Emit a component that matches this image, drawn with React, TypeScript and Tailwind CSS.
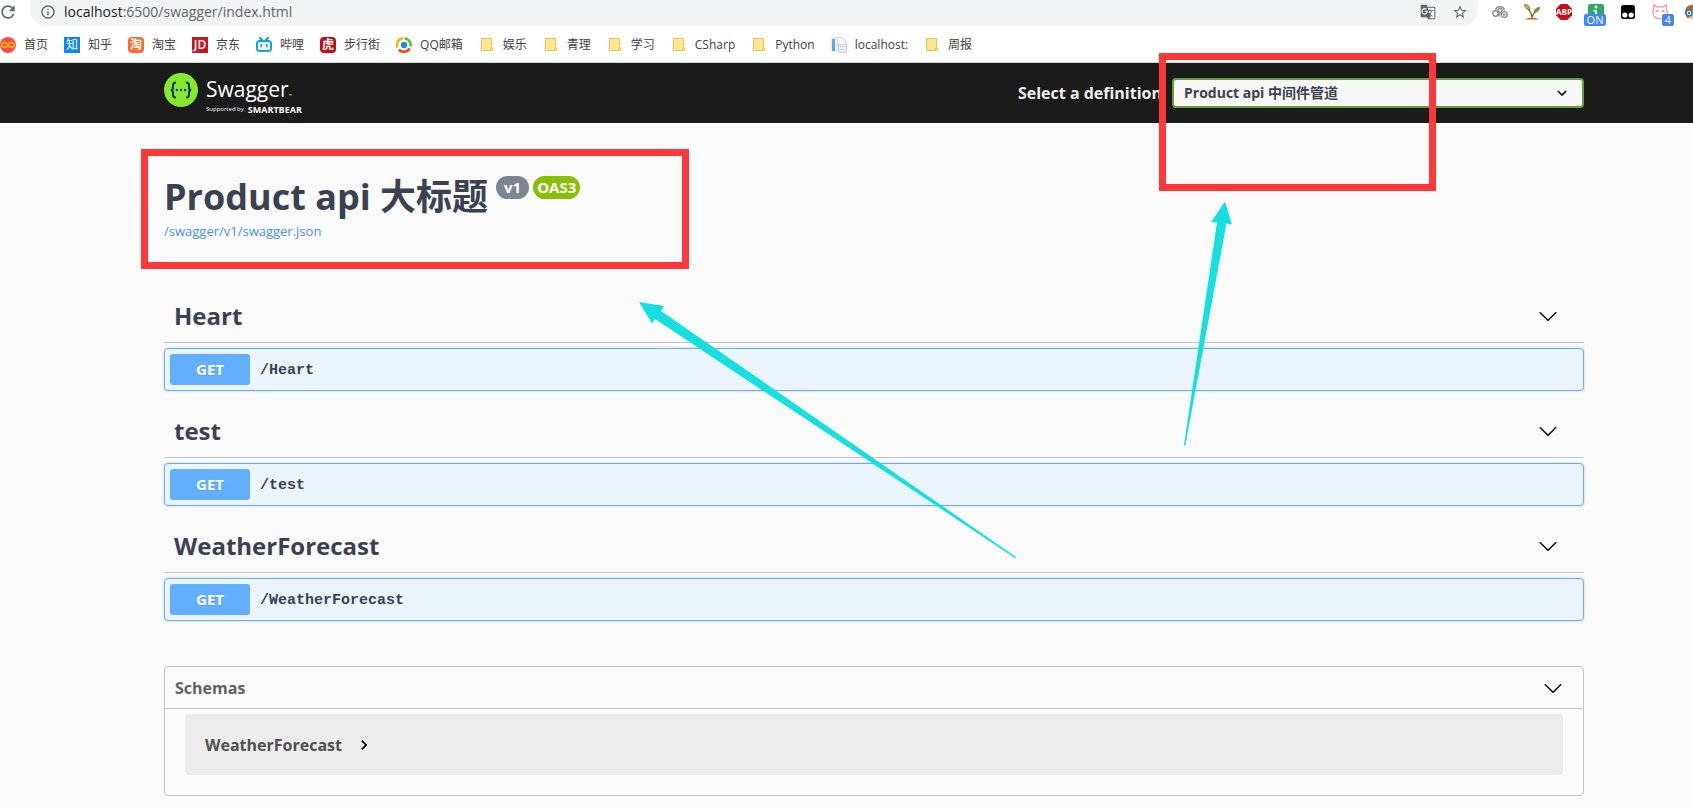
import React from 'react'
import { MdStarBorder, MdGTranslate, MdRefresh, MdInfoOutline } from 'react-icons/md'

interface Bookmark {
  label: string
  icon: React.ReactNode
}

const FolderIcon = () => (
  <svg className="size-4" viewBox="0 0 16 16">
    <path d="M2.5 1.5h10v9h1v3h-11z" fill="#ffe694" stroke="#e8c445" />
    <path d="M11.5 13.5v-2.5h2v2.5z" fill="#ffe694" stroke="#e8c445" />
  </svg>
)

const HomeIcon = () => (
  <svg className="size-4" viewBox="0 0 16 16">
    <circle cx="8" cy="8" r="8" fill="#ff4a4a" />
    <path
      d="M8 8C6.500 5.800 5.500 5.500 4.500 5.500a2.500 2.500 0 0 0 0 5C5.500 10.500 6.500 10.200 8 8s2.500-2.500 3.500-2.500a2.500 2.500 0 0 1 0 5C10.500 10.500 9.500 10.200 8 8z"
      fill="none"
      stroke="#ffc400"
      strokeWidth="1.500"
    />
  </svg>
)

const BiliIcon = () => (
  <svg className="size-4" viewBox="0 0 16 16" fill="none" stroke="#10a5dc" strokeWidth="2" strokeLinecap="round">
    <rect x="1" y="4" width="14" height="10" rx="2.500" />
    <path d="M4 1l2.500 2.500M12 1L9.500 3.500M5.200 8v1.500M10.800 8v1.500" />
  </svg>
)

const QQMailIcon = () => (
  <svg className="size-4" viewBox="0 0 16 16" fill="none">
    <path d="M1.200 10.500A7 7 0 0 1 7 1.300" stroke="#fbb500" strokeWidth="2.600" />
    <path d="M8.500 1.300A7 7 0 0 1 14.600 9.500" stroke="#5fb930" strokeWidth="2.600" />
    <path d="M13.800 11.500A7 7 0 0 1 2.800 12.600" stroke="#f04a12" strokeWidth="2.600" />
    <circle cx="8" cy="8" r="3.200" fill="#1f8fe0" />
  </svg>
)

const PageIcon = () => (
  <svg className="size-4" viewBox="0 0 16 16">
    <path d="M1 1h9v13H1z" fill="#f1f4f8" stroke="#ccd5df" />
    <path d="M1 2h3v12H1z" fill="#5fa8dc" />
    <path d="M6.500.5h5l3 3v6h-8z" fill="#fbfcfd" stroke="#d2d8e0" />
    <path d="M7.500 7.500h8v8h-8z" fill="#eef0f4" stroke="#c8ced8" />
    <path d="M9 9.500h5M9 12.500h5" stroke="#cdd2dc" />
  </svg>
)

const bookmarks: Bookmark[] = [
  { label: '首页', icon: <HomeIcon /> },
  {
    label: '知乎',
    icon: <span className="flex size-4 items-center justify-center bg-[#0f88eb] text-xs leading-4 text-white">知</span>,
  },
  {
    label: '淘宝',
    icon: (
      <span className="flex size-4 items-center justify-center rounded bg-[#ff6a2b] text-xs leading-4 font-bold text-white">
        淘
      </span>
    ),
  },
  {
    label: '京东',
    icon: (
      <span className="flex size-4 items-center justify-center bg-[#c8161d] text-xs leading-4 font-semibold text-white">JD</span>
    ),
  },
  { label: '哔哩', icon: <BiliIcon /> },
  {
    label: '步行街',
    icon: (
      <span className="flex size-4 items-center justify-center rounded-sm bg-[#c40d12] text-xs leading-4 font-bold text-white">
        虎
      </span>
    ),
  },
  { label: 'QQ邮箱', icon: <QQMailIcon /> },
  { label: '娱乐', icon: <FolderIcon /> },
  { label: '青理', icon: <FolderIcon /> },
  { label: '学习', icon: <FolderIcon /> },
  { label: 'CSharp', icon: <FolderIcon /> },
  { label: 'Python', icon: <FolderIcon /> },
  { label: 'localhost:', icon: <PageIcon /> },
  { label: '周报', icon: <FolderIcon /> },
]

const tags = [
  { name: 'Heart', path: '/Heart' },
  { name: 'test', path: '/test' },
  { name: 'WeatherForecast', path: '/WeatherForecast' },
]

const LargeArrow = () => (
  <svg className="size-5" viewBox="0 0 20 20" fill="#111">
    <path d="M17.418 6.109c.272-.268.709-.268.979 0s.271.701 0 .969l-7.908 7.830c-.27.268-.707.268-.979 0l-7.908-7.830c-.27-.268-.27-.701 0-.969.271-.268.709-.268.979 0L10 13.250l7.418-7.141z" />
  </svg>
)

const Extensions = () => (
  <div className="flex shrink-0 items-start gap-4 pl-3.5">
    <button type="button" aria-label="Links" className="size-4">
      <svg className="size-4" viewBox="0 0 16 16" fill="none" stroke="#8d8d8d" strokeWidth="1.400">
        <circle cx="3.500" cy="9.500" r="2.700" />
        <path d="M3.500 6.500C4 3.500 6 2.700 8 2.700s4 1.300 4.500 4" />
        <circle cx="8" cy="6.500" r="2" />
        <circle cx="12.300" cy="10.500" r="2.900" />
        <path d="M5.500 11.500l4-3M8 12.500l-2-1.500" />
        <circle cx="12.300" cy="10.500" r=".6" />
      </svg>
    </button>
    <button type="button" aria-label="Sprout" className="size-4">
      <svg className="size-4" viewBox="0 0 16 16">
        <path d="M8 14C8 10 6 7 3 3.500M8.500 13c.5-3 2-5 4.500-7" fill="none" stroke="#7a5a2a" strokeWidth="1.200" />
        <path d="M.5.500c3-.3 5.500 1.500 5.500 5C3 6 .5 4 .5.500z" fill="#a8c83a" stroke="#566b1c" strokeWidth=".7" />
        <path d="M15.500 3.500c-3 0-5 1.500-5 4.500 3 .5 5-1.500 5-4.500z" fill="#7cab38" stroke="#4b6420" strokeWidth=".7" />
        <path d="M1 15.500c2-2.500 12-2.500 14 0z" fill="#b0722e" />
      </svg>
    </button>
    <button type="button" aria-label="Adblock Plus" className="size-4">
      <svg className="size-4" viewBox="0 0 16 16">
        <path d="M4.700 0h6.600L16 4.700v6.600L11.300 16H4.700L0 11.300V4.700z" fill="#c70d0d" />
        <text x="8" y="11" textAnchor="middle" fontSize="8" fontWeight="700" fill="#fff">ABP</text>
      </svg>
    </button>
    <button type="button" aria-label="Info" className="relative size-4">
      <svg className="size-4" viewBox="0 0 16 16">
        <rect width="16" height="16" rx="2" fill="#2fa866" />
        <circle cx="8" cy="3" r="1.500" fill="#fff" />
        <path d="M5.500 6H9v5H7V7.500H5.500z" fill="#fff" />
      </svg>
      <span className="absolute top-2.5 -left-1 h-3 w-[22px] rounded-xs bg-[#4285f4] text-center text-[11px] leading-3 text-white">
        ON
      </span>
    </button>
    <button type="button" aria-label="Scripts" className="size-4">
      <svg className="size-4" viewBox="0 0 16 16">
        <rect x="1" y="1" width="14" height="14" rx="2.500" fill="#000" />
        <circle cx="4.800" cy="11" r="2.600" fill="#fff" />
        <circle cx="11.200" cy="11" r="2.600" fill="#fff" />
      </svg>
    </button>
    <button type="button" aria-label="Cat" className="relative size-4">
      <svg className="size-4" viewBox="0 0 16 16" fill="none" stroke="#f48aa8" strokeWidth="1.200">
        <path d="M2 .8l2.500 2h7L14 .8l1 6.700c.5 4-2 7.500-7 7.500S.5 11.500 1 7.500z" />
        <path d="M3.500 7h3M9.500 7h3" stroke="#c9506f" />
      </svg>
      <span className="absolute top-2.5 left-2.5 size-3 rounded-xs bg-[#4285f4] text-center text-[11px] leading-3 text-white">
        4
      </span>
    </button>
    <button type="button" aria-label="Profile" className="w-[9px] overflow-hidden">
      <svg className="size-4" viewBox="0 0 16 16">
        <path d="M1 9C1 3 4 1 8 1s7 3 7 7v6H3z" fill="#a8682a" />
        <path d="M4 6h9v9H5z" fill="#f3c08c" />
        <circle cx="5" cy="9" r="3" fill="#fff" stroke="#2878c8" strokeWidth="1.600" />
        <circle cx="5" cy="9" r="1" fill="#24456b" />
      </svg>
    </button>
  </div>
)

const BrowserBar = () => (
  <div className="border-b border-[#d5d7da] bg-white">
    <div className="flex h-[26px] items-start">
      <button type="button" aria-label="Reload" className="w-[30px] shrink-0 overflow-hidden pt-0.5 text-[#5f6368]">
        <MdRefresh className="-ml-0.5 size-5" />
      </button>
      <div className="flex h-[26px] flex-1 items-center rounded-b-2xl bg-[#f1f3f4] pr-2.5 pb-0.5 pl-2.5 text-[#5f6368]">
        <MdInfoOutline className="size-4" />
        <div className="ml-2 flex-1 text-sm leading-5">
          <span className="text-[#202124]">localhost</span>:6500/swagger/index.html
        </div>
        <button type="button" aria-label="Translate">
          <MdGTranslate className="size-4" />
        </button>
        <button type="button" aria-label="Bookmark this page" className="ml-4">
          <MdStarBorder className="size-4" />
        </button>
      </div>
      <div className="pt-1">
        <Extensions />
      </div>
    </div>
    <nav className="flex h-9 items-center gap-4 pt-0.5 whitespace-nowrap">
      {bookmarks.map((item) => (
        <a key={item.label} href="#" className="flex items-center gap-2 text-xs text-[#3c4043]">
          {item.icon}
          <span>{item.label}</span>
        </a>
      ))}
    </nav>
  </div>
)

const SwaggerLogo = () => (
  <a href="#" className="flex h-10 items-start gap-2 text-white">
    <svg className="size-[34px]" viewBox="0 0 34 34" fill="none">
      <circle cx="17" cy="17" r="17" fill="#85ea2d" />
      <path
        d="M12 9.500c-2.500 0-3 .8-3 2.500v2.500c0 1.600-.6 2.500-2.300 2.500 1.700 0 2.300.9 2.300 2.500V22c0 1.700.5 2.500 3 2.500M22 9.500c2.500 0 3 .8 3 2.500v2.500c0 1.600.6 2.500 2.300 2.500-1.700 0-2.300.9-2.300 2.500V22c0 1.700-.5 2.500-3 2.500"
        stroke="#173647"
        strokeWidth="2"
      />
      <circle cx="12.800" cy="17" r="1.200" fill="#173647" />
      <circle cx="17" cy="17" r="1.200" fill="#173647" />
      <circle cx="21.200" cy="17" r="1.200" fill="#173647" />
    </svg>
    <span className="flex flex-col pt-0.5">
      <span className="h-[30px] text-[21px] leading-7">
        Swagger<span className="text-[4px]">™</span>
      </span>
      <span className="flex h-2 items-center gap-1 text-[6px] leading-none">
        Supported by <span className="text-[9px] leading-none font-bold">SMARTBEAR</span>
      </span>
    </span>
  </a>
)

const TopBar = () => (
  <header className="flex h-[60px] items-center justify-between bg-[#1b1b1b] pr-[109px] pl-[164px]">
    <SwaggerLogo />
    <div className="flex items-center gap-2.5">
      <label htmlFor="definition" className="text-base font-bold text-[#f0f0f0]">
        Select a definition
      </label>
      <div className="relative w-[412px]">
        <select
          id="definition"
          className="h-[30px] w-full appearance-none rounded border-2 border-[#62a03f] bg-[#f7f7f7] pr-10 pl-2.5 text-sm leading-5 font-bold text-[#3b4151]"
        >
          <option>Product api 中间件管道</option>
        </select>
        <svg className="pointer-events-none absolute top-[5px] right-3 size-5" viewBox="0 0 20 20">
          <path d="M13.418 7.859c.271-.268.709-.268.978 0 .27.268.272.701 0 .969l-3.908 3.830c-.27.268-.707.268-.979 0l-3.908-3.830c-.27-.267-.27-.701 0-.969.271-.268.709-.268.978 0L10 11l3.418-3.141z" />
        </svg>
      </div>
    </div>
  </header>
)

const Info = () => (
  <section className="pt-[50px] pb-[50px]">
    <h2 className="flex items-start gap-1 text-4xl leading-[48px] font-bold text-[#3b4151]">
      <span className="mr-1">Product api 大标题</span>
      <span className="mt-[3px] rounded-full bg-[#7d8492] px-2 text-[15px] leading-[23px] text-white">v1</span>
      <span className="mt-[3px] rounded-full bg-[#89bf04] px-1 text-[15px] leading-[23px] text-white">OAS3</span>
    </h2>
    <a href="#" className="block text-[13px] leading-[21px] text-[#4990e2]">
      /swagger/v1/swagger.json
    </a>
  </section>
)

const TagSection: React.FC<{ name: string; path: string }> = ({ name, path }) => (
  <section>
    <h3 className="flex h-[51px] items-center justify-between border-b border-[#c2c4c8] pr-[26px] pb-0.5 pl-2.5 text-2xl font-bold text-[#3b4151]">
      {name}
      <button type="button" aria-label="Collapse operation">
        <LargeArrow />
      </button>
    </h3>
    <div className="mt-[5px] flex items-center rounded border border-[#61affe] bg-[#ebf3fb] p-[5px] shadow-[0_0_3px_rgba(0,0,0,0.19)]">
      <button
        type="button"
        className="h-[31px] w-20 rounded-[3px] bg-[#61affe] text-[15px] font-bold text-white [text-shadow:0_1px_0_rgba(0,0,0,0.1)]"
      >
        GET
      </button>
      <span className="px-2.5 pt-1 font-['Liberation_Mono',monospace] text-[15px] font-bold text-[#3b4151]">{path}</span>
    </div>
  </section>
)

const Schemas = () => (
  <section className="mt-[45px] rounded border border-[#c2c4c8] pb-5">
    <h4 className="flex h-[42px] items-center justify-between border-b border-[#c2c4c8] pr-5 pl-2.5 text-base font-bold text-[#606060]">
      Schemas
      <button type="button" aria-label="Collapse schemas">
        <LargeArrow />
      </button>
    </h4>
    <div className="mx-5 mt-[5px] flex h-[61px] items-center rounded bg-[#ececec] px-5">
      <button type="button" className="flex items-center gap-3 text-base font-bold text-[#505050]">
        WeatherForecast
        <svg className="size-5" viewBox="0 0 24 24" fill="#000">
          <path d="M10 6L8.590 7.410 13.170 12l-4.580 4.590L10 18l6-6z" />
        </svg>
      </button>
    </div>
  </section>
)

// Red frames and arrows drawn over the page
const Annotations = () => (
  <svg className="pointer-events-none absolute inset-0 size-full">
    <g fill="none" stroke="#fc3838" strokeWidth="7">
      <rect x="144.500" y="152.500" width="541" height="113" />
      <rect x="1162.500" y="56.500" width="270" height="131" />
    </g>
    <g fill="#18dfdf">
      <path d="M639 302l25 4-3 5 355 246-.8 1.200L655 319l-3 4.500z" />
      <path d="M1225 201.500l7 23-5.500-1L1185.300 445.500h-1.400L1217 222.500l-6-.5z" />
    </g>
  </svg>
)

export default function App() {
  return (
    <div className="relative min-h-screen overflow-hidden bg-[#fafafa] font-['Open_Sans','Noto_Sans_CJK_SC',sans-serif]">
      <BrowserBar />
      <TopBar />
      <main className="pr-[109px] pb-2.5 pl-[164px]">
        <Info />
        <div className="flex flex-col gap-4">
          {tags.map((tag) => (
            <TagSection key={tag.name} name={tag.name} path={tag.path} />
          ))}
        </div>
        <Schemas />
      </main>
      <Annotations />
    </div>
  )
}
